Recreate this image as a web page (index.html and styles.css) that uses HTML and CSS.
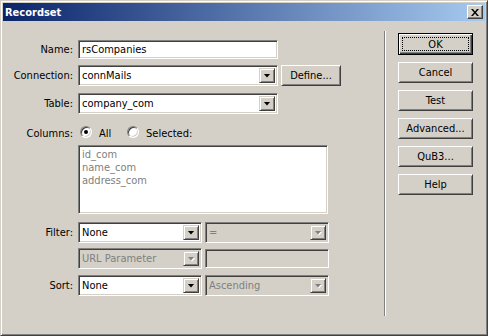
FILE: index.html
```html
<!DOCTYPE html>
<html lang="en">
<head>
  <meta charset="UTF-8" />
  <title>Recordset</title>
  <link rel="stylesheet" href="styles.css">
</head>
<body>

  <div class="window">
    <div class="titlebar">
      <span class="title">Recordset</span>
      <span class="close">
        <svg width="8" height="7" viewBox="0 0 8 7"><path d="M0 0h2l2 2.4L6 0h2L5 3.5 8 7H6L4 4.6 2 7H0l3-3.5z"/></svg>
      </span>
    </div>

    <div class="dialog">
      <div class="form">
        <div class="row row-name">
          <span class="label">Name:</span>
          <div class="field edit w-wide">rsCompanies</div>
        </div>

        <div class="row row-conn">
          <span class="label">Connection:</span>
          <div class="field combo w-wide"><span class="value">connMails</span><span class="drop"><i></i></span></div>
          <div class="btn define">Define...</div>
        </div>

        <div class="row row-table">
          <span class="label">Table:</span>
          <div class="field combo w-wide"><span class="value">company_com</span><span class="drop"><i></i></span></div>
        </div>

        <div class="row row-columns">
          <span class="label">Columns:</span>
          <span class="opt opt-all"><span class="radio checked"></span>All</span>
          <span class="opt"><span class="radio"></span>Selected:</span>
        </div>

        <div class="row row-list">
          <span class="label"></span>
          <div class="field list">
            <div>id_com</div>
            <div>name_com</div>
            <div>address_com</div>
          </div>
        </div>

        <div class="row row-filter">
          <span class="label">Filter:</span>
          <div class="field combo w-half"><span class="value">None</span><span class="drop"><i></i></span></div>
          <div class="field combo w-half disabled next"><span class="value">=</span><span class="drop"><i></i></span></div>
        </div>

        <div class="row row-param">
          <span class="label"></span>
          <div class="field combo w-half disabled"><span class="value">URL Parameter</span><span class="drop"><i></i></span></div>
          <div class="field edit w-half disabled next param-value"></div>
        </div>

        <div class="row row-sort">
          <span class="label">Sort:</span>
          <div class="field combo w-half"><span class="value">None</span><span class="drop"><i></i></span></div>
          <div class="field combo w-half disabled next"><span class="value">Ascending</span><span class="drop"><i></i></span></div>
        </div>
      </div>

      <div class="separator"></div>

      <div class="buttons">
        <div class="btn default">OK</div>
        <div class="btn">Cancel</div>
        <div class="btn">Test</div>
        <div class="btn">Advanced...</div>
        <div class="btn">QuB3...</div>
        <div class="btn">Help</div>
      </div>
    </div>
  </div>

</body>
</html>
```

FILE: styles.css
```css
body {
  margin: 0;
  background: #d4d0c8;
  font-family: "DejaVu Sans Condensed", "DejaVu Sans", sans-serif;
  font-size: 11px;
  color: #000;
}

.window {
  width: 488px;
  height: 336px;
  box-sizing: border-box;
  padding: 2px;
  background: #d4d0c8;
  border: 1px solid;
  border-color: #d4d0c8 #404040 #404040 #d4d0c8;
  box-shadow: inset 1px 1px #fff, inset -1px -1px #808080;
}

/* title bar */
.titlebar {
  height: 18px;
  display: flex;
  align-items: center;
  justify-content: space-between;
  padding: 0 2px;
  background: linear-gradient(to right, #0a246a, #a6caf0);
}

.title {
  color: #fff;
  font-weight: bold;
}

.close {
  width: 16px;
  height: 14px;
  box-sizing: border-box;
  display: flex;
  align-items: center;
  justify-content: center;
  background: #d4d0c8;
  border: 1px solid;
  border-color: #fff #404040 #404040 #fff;
  box-shadow: inset -1px -1px #808080;
}

/* dialog body */
.dialog {
  display: flex;
  padding-top: 10px;
}

.form {
  width: 381px;
  padding-top: 9px;
}

.separator {
  width: 0;
  height: 285px;
  border-left: 1px solid #808080;
  border-right: 1px solid #fff;
}

.buttons {
  margin-left: 12px;
  padding-top: 3px;
  display: flex;
  flex-direction: column;
  gap: 7px;
}

.row {
  display: flex;
  align-items: center;
}

.row-conn { margin-top: 6px; }
.row-table { margin-top: 7px; }
.row-columns { margin-top: 11px; height: 16px; }
.row-list { margin-top: 4px; }
.row-filter { margin-top: 8px; }
.row-param { margin-top: 5px; }
.row-sort { margin-top: 6px; }

.label {
  flex: none;
  width: 70px;
  margin-right: 5px;
  text-align: right;
}

/* sunken controls */
.field {
  box-sizing: border-box;
  display: flex;
  align-items: center;
  background: #fff;
  border: 1px solid;
  border-color: #808080 #fff #fff #808080;
  box-shadow: inset 1px 1px #404040, inset -1px -1px #d4d0c8;
  white-space: nowrap;
}

.edit {
  height: 19px;
  padding: 0 3px;
}

.combo {
  height: 21px;
  padding: 2px 2px 2px 3px;
  align-items: stretch;
  justify-content: space-between;
}

.combo .value {
  align-self: center;
}

.w-wide { width: 200px; }
.w-half { width: 124px; }
.next { margin-left: 3px; }

.disabled {
  background: #d4d0c8;
  color: #808080;
}

.param-value {
  height: 19px;
}

.drop {
  width: 16px;
  box-sizing: border-box;
  display: flex;
  align-items: center;
  justify-content: center;
  background: #d4d0c8;
  border: 1px solid;
  border-color: #d4d0c8 #404040 #404040 #d4d0c8;
  box-shadow: inset 1px 1px #fff, inset -1px -1px #808080;
}

.drop i {
  display: block;
}

.drop i::after {
  content: "";
  display: block;
  width: 7px;
  height: 4px;
  background: #000;
  clip-path: polygon(0 0, 100% 0, 50% 100%);
}

.disabled .drop i {
  filter: drop-shadow(1px 1px 0 #fff);
}

.disabled .drop i::after {
  background: #808080;
}

.list {
  width: 250px;
  height: 69px;
  padding: 2px 3px;
  display: block;
  line-height: 13px;
  color: #808080;
}

/* radios */
.opt {
  display: flex;
  align-items: center;
  gap: 7px;
}

.opt-all {
  width: 47px;
  margin-left: 2px;
}

.radio {
  width: 12px;
  height: 12px;
  box-sizing: border-box;
  display: flex;
  align-items: center;
  justify-content: center;
  border-radius: 50%;
  background: #fff;
  border: 1px solid;
  border-color: #808080 #fff #fff #808080;
  box-shadow: inset 1px 1px #404040, inset -1px -1px #d4d0c8;
  margin-top: -2px;
}

.radio.checked::after {
  content: "";
  width: 4px;
  height: 4px;
  border-radius: 50%;
  background: #000;
}

/* raised buttons */
.btn {
  width: 75px;
  height: 21px;
  box-sizing: border-box;
  display: flex;
  align-items: center;
  justify-content: center;
  background: #d4d0c8;
  border: 1px solid;
  border-color: #fff #404040 #404040 #fff;
  box-shadow: inset 1px 1px #d4d0c8, inset -1px -1px #808080;
}

.btn.define {
  width: 60px;
  margin-left: 3px;
}

.btn.default {
  height: 22px;
  margin-top: -1px;
  border-color: #000;
  box-shadow: inset 1px 1px #fff, inset -1px -1px #404040, inset -2px -2px #808080;
  outline: 1px dotted #000;
  outline-offset: -5px;
}
```
